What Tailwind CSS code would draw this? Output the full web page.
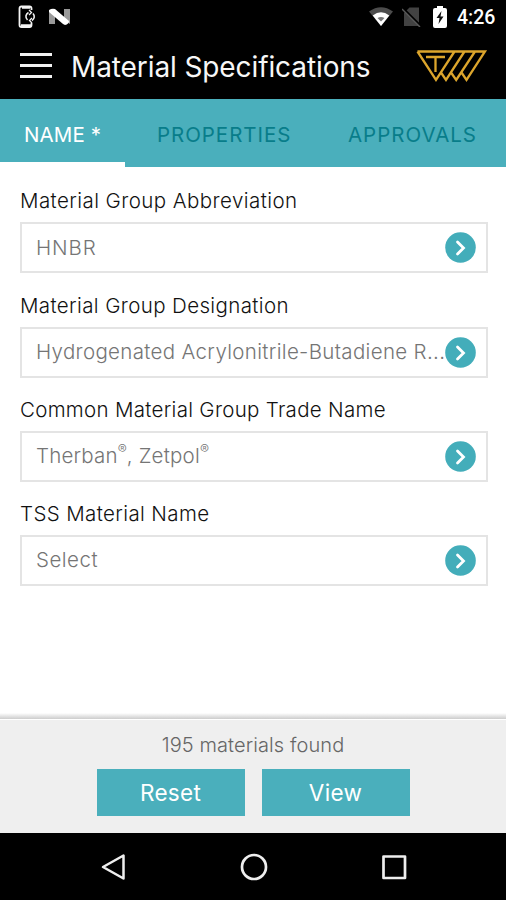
<!DOCTYPE html>
<html lang="en">
<head>
<meta charset="utf-8">
<title>Material Specifications</title>
<script src="https://cdn.jsdelivr.net/npm/@tailwindcss/browser@4"></script>
</head>
<body class="w-[506px] h-[900px] overflow-hidden bg-white font-['Inter',sans-serif] font-light flex flex-col">
<div class="h-[34px] shrink-0 bg-black flex items-center">
  <svg class="ml-[17px] w-[20px] h-[24px]" viewBox="0 0 20 24" fill="none" stroke="#f4f4f4"><path d="M14.500 5V3.500Q14.500 1.500 12.500 1.500H4.500Q2.500 1.500 2.500 3.500V20Q2.500 22 4.500 22H12.500Q14.500 22 14.500 20V18" stroke-width="1.800"/><path d="M4 20.500H14M5 2.500H13" stroke-width="2.500"/><path d="M11.500 7.500A4.500 4.500 0 0 0 10.500 15M15 15.500A4.500 4.500 0 0 0 16 8.500" stroke-width="1.600"/><path d="M12 5L14.500 7.500L12 10M15 13L12.500 15.500L15 18" stroke-width="1.300"/></svg>
  <svg class="ml-[12px] w-[22px] h-[18px]" viewBox="0 0 22 18"><path d="M0 2L6 5V16H0ZM15 1H21V16L15 12Z" fill="#999"/><path d="M0 2Q3 0 6 1L20 13Q20 16 16 17L14 16L0 4Z" fill="#fff"/></svg>
  <svg class="ml-[298px] w-[24px] h-[20px]" viewBox="0 0 24 20"><path d="M0 4.500Q12-4 24 4.500L12 19Z" fill="#4c4c4c"/><path d="M3.700 8.500Q12 2 20.300 8.500L12 19Z" fill="#fff"/><path d="M8.500 11Q12 9 15.500 11L12 14.500Z" fill="#777"/></svg>
  <svg class="ml-[9px] w-[20px] h-[20px]" viewBox="0 0 20 20"><path d="M2 6L7.500 0.500H17V19H2Z" fill="#424242"/><path d="M0 .5L18.500 19" stroke="#000" stroke-width="2.500"/><path d="M0 2L18 20" stroke="#595959" stroke-width="1.500"/></svg>
  <svg class="ml-[11px] w-[14px] h-[22px]" viewBox="0 0 14 22"><path d="M4 0H10V2H12Q14 2 14 4V20Q14 22 12 22H2Q0 22 0 20V4Q0 2 2 2H4Z" fill="#fff"/><path d="M8.500 5L3.500 12H6.500L5.500 18L10.500 10.500H7.500Z" fill="#111"/></svg>
  <span class="ml-[10px] mt-[2px] font-['Roboto',sans-serif] font-medium text-[19.500px] leading-[22px] text-white whitespace-nowrap">4:26</span>
</div>
<header class="h-[65px] shrink-0 bg-black flex items-start">
  <div class="ml-[20px] mt-[19px] w-[32px] flex flex-col gap-[8px]"><i class="h-[3px] bg-[#f2f2f2]"></i><i class="h-[3px] bg-[#f2f2f2]"></i><i class="h-[3px] bg-[#f2f2f2]"></i></div>
  <h1 class="ml-[19px] mt-[17px] w-[301px] text-[28px] leading-[32px] font-normal tracking-[-.1px] text-[#f7f7f7] whitespace-nowrap">Material Specifications</h1>
  <svg class="ml-[42px] mt-[15px] w-[74px] h-[35px]" viewBox="0 0 74 35" fill="none" stroke="#dca52c" stroke-width="2.300"><path d="M3.500 2.500H71L52.500 31L47.500 23.500M3.500 2.500L22 31L40.500 2.500M27 23.500L32 31L50.500 2.500M37 23.500L42.200 31L61 2.500"/><path d="M12 8H31M21.500 8V23" stroke-width="2.300"/></svg>
</header>
<nav class="h-[68px] shrink-0 bg-[#4aafbc] text-[20.500px] leading-[24px] text-[#087d8a] flex whitespace-nowrap">
  <div class="w-[125px] pl-[24px] pt-[24px] border-b-[5px] border-white text-white font-normal tracking-[.1px]"><span>NAME *</span></div>
  <div class="w-[191px] pl-[32px] pt-[24px] font-normal tracking-[.95px]"><span>PROPERTIES</span></div>
  <div class="pl-[32px] pt-[24px] font-normal tracking-[.98px]"><span>APPROVALS</span></div>
</nav>
<main class="h-[546px] shrink-0 px-[20px] pt-[20px] text-[20.500px] flex flex-col">
  <section class="h-[105px]"><h2 class="h-[35px] leading-[28px] text-[#111] whitespace-nowrap"><span class="tracking-[.43px]">Material Group Abbreviation</span></h2>
    <div class="w-[468px] h-[51px] border-2 border-[#e4e4e4] pl-[14px] pr-[10px] flex items-center text-[#757575]"><span class="flex-1 pt-[1px] whitespace-nowrap tracking-[.9px]">HNBR</span><svg class="w-[31px] h-[31px]" viewBox="0 0 31 31"><circle cx="15.500" cy="15.500" r="15.300" fill="#43adba"/><path d="M12.500 10L18.500 16L12.500 22" fill="none" stroke="#fff" stroke-width="2.800" stroke-linecap="round"/></svg></div></section>
  <section class="h-[104px]"><h2 class="h-[35px] leading-[27px] text-[#111] whitespace-nowrap"><span class="tracking-[.38px]">Material Group Designation</span></h2>
    <div class="w-[468px] h-[51px] border-2 border-[#e4e4e4] pl-[14px] pr-[10px] flex items-center text-[#757575]"><span class="flex-1 w-0 whitespace-nowrap tracking-[.33px]">Hydrogenated Acrylonitrile-Butadiene R...</span><svg class="w-[31px] h-[31px] shrink-0" viewBox="0 0 31 31"><circle cx="15.500" cy="15.500" r="15.300" fill="#43adba"/><path d="M12.500 10L18.500 16L12.500 22" fill="none" stroke="#fff" stroke-width="2.800" stroke-linecap="round"/></svg></div></section>
  <section class="h-[104px]"><h2 class="h-[35px] leading-[27px] text-[#111] whitespace-nowrap"><span class="tracking-[.3px]">Common Material Group Trade Name</span></h2>
    <div class="w-[468px] h-[51px] border-2 border-[#e4e4e4] pl-[14px] pr-[10px] flex items-center text-[#757575]"><span class="flex-1 whitespace-nowrap tracking-[.2px]">Therban<sup class="text-[13.500px] top-[-9px] tracking-[-.2px]">®</sup>, Zetpol<sup class="text-[13.500px] top-[-9px]">®</sup></span><svg class="w-[31px] h-[31px]" viewBox="0 0 31 31"><circle cx="15.500" cy="15.500" r="15.300" fill="#43adba"/><path d="M12.500 10L18.500 16L12.500 22" fill="none" stroke="#fff" stroke-width="2.800" stroke-linecap="round"/></svg></div></section>
  <section class="h-[104px]"><h2 class="h-[35px] leading-[27px] text-[#111] whitespace-nowrap"><span class="tracking-[.38px]">TSS Material Name</span></h2>
    <div class="w-[468px] h-[51px] border-2 border-[#e4e4e4] pl-[14px] pr-[10px] flex items-center text-[#757575]"><span class="flex-1 whitespace-nowrap tracking-[.5px]">Select</span><svg class="w-[31px] h-[31px]" viewBox="0 0 31 31"><circle cx="15.500" cy="15.500" r="15.300" fill="#43adba"/><path d="M12.500 10L18.500 16L12.500 22" fill="none" stroke="#fff" stroke-width="2.800" stroke-linecap="round"/></svg></div></section>
</main>
<div class="h-[6px] shrink-0 bg-linear-to-b from-white to-[#cccccc]"></div>
<footer class="h-[114px] shrink-0 bg-[#efefef] border-t border-white flex flex-col items-center pt-[12px]">
  <p class="text-[20px] leading-[26px] text-[#666] tracking-[.1px] whitespace-nowrap"><span>195 materials found</span></p>
  <div class="mt-[11px] flex gap-[17px] text-white font-normal text-[22.500px] leading-[45px] tracking-[.3px] text-center"><button class="w-[148px] h-[47px] bg-[#4aafbc]"><span>Reset</span></button><button class="w-[148px] h-[47px] bg-[#4aafbc]"><span>View</span></button></div>
</footer>
<div class="h-[67px] shrink-0 bg-black flex items-center">
  <svg class="ml-[100px] w-[28px] h-[30px]" viewBox="0 0 28 30" fill="none" stroke="#eee" stroke-width="2.500" stroke-linejoin="round"><path d="M23.500 3.500V26.500L3 15Z"/></svg>
  <svg class="ml-[111px] w-[30px] h-[30px]" viewBox="0 0 30 30" fill="none" stroke="#eee" stroke-width="2.700"><circle cx="15" cy="15" r="12"/></svg>
  <svg class="ml-[111px] w-[28px] h-[28px]" viewBox="0 0 28 28" fill="none" stroke="#eee" stroke-width="2.700" stroke-linejoin="round"><rect x="3.500" y="3.500" width="21.500" height="21.500"/></svg>
</div>
</body>
</html>
